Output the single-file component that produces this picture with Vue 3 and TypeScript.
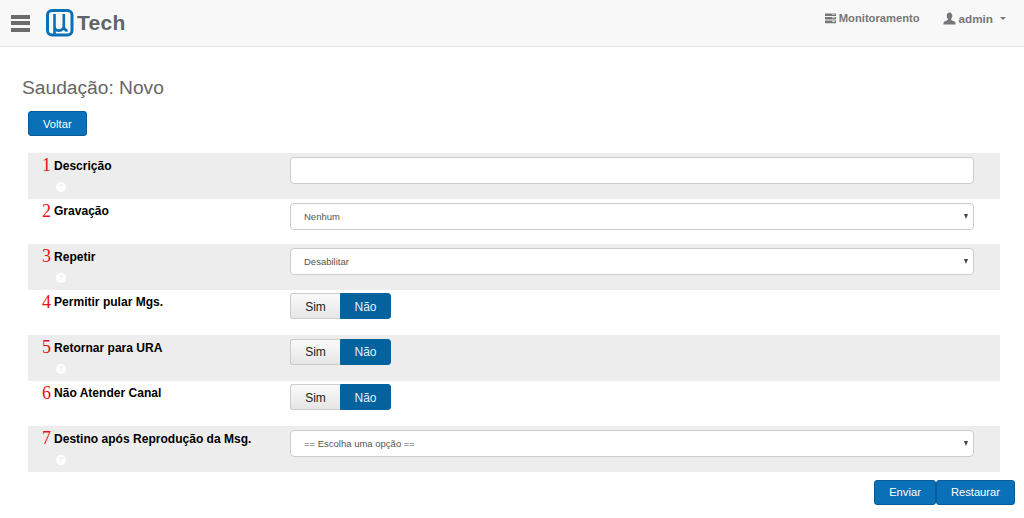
<script setup lang="ts">
interface Row {
  num: number
  label: string
  help: boolean
  kind: 'text' | 'select' | 'toggle'
  value?: string
}

const rows: Row[] = [
  { num: 1, label: 'Descrição', help: true, kind: 'text' },
  { num: 2, label: 'Gravação', help: false, kind: 'select', value: 'Nenhum' },
  { num: 3, label: 'Repetir', help: true, kind: 'select', value: 'Desabilitar' },
  { num: 4, label: 'Permitir pular Mgs.', help: false, kind: 'toggle' },
  { num: 5, label: 'Retornar para URA', help: true, kind: 'toggle' },
  { num: 6, label: 'Não Atender Canal', help: false, kind: 'toggle' },
  { num: 7, label: 'Destino após Reprodução da Msg.', help: true, kind: 'select', value: '== Escolha uma opção ==' }
]
</script>

<template>
  <div class="page">
    <header class="navbar">
      <div class="brand">
        <span class="burger"><i></i><i></i><i></i></span>
        <svg class="logo" width="30" height="30" viewBox="0 0 30 30">
          <rect x="2.5" y="2.5" width="24.5" height="24.5" rx="4.5" fill="none" stroke="#0a70b8" stroke-width="3" />
          <path d="M9.5 6V26M9.5 18C9.5 21.4 11.2 22.6 13.6 22.6C16.4 22.6 18.8 21 18.8 17.5V6M18.8 17.5C18.8 21.2 20 22.6 22.6 22.6" fill="none" stroke="#0a70b8" stroke-width="2.6" />
        </svg>
        <span class="brand-name">Tech</span>
      </div>
      <nav class="nav-right">
        <span class="nav-item">
          <svg width="11" height="11" viewBox="0 0 11 11">
            <path d="M0 0.5H11V3H0ZM0 4H11V6.6H0ZM0 7.6H11V10.2H0Z" fill="#777" />
            <path d="M7 1.2H10M7 4.8H10M7 8.4H10" stroke="#f5f5f5" stroke-width="0.8" />
          </svg>
          Monitoramento
        </span>
        <span class="nav-item user">
          <svg width="13" height="13" viewBox="0 0 13 13">
            <path d="M6.5 0.5C8.3 0.5 9.3 1.9 9.3 3.8C9.3 5.2 8.7 6.4 8 7C8 8 8.6 8.2 10 8.8C11.4 9.4 12.5 9.9 12.5 11V12.5H0.5V11C0.5 9.9 1.6 9.4 3 8.8C4.4 8.2 5 8 5 7C4.3 6.4 3.7 5.2 3.7 3.8C3.7 1.9 4.7 0.5 6.5 0.5Z" fill="#777" />
          </svg>
          admin
          <span class="caret"></span>
        </span>
      </nav>
    </header>

    <main class="content">
      <h1 class="title">Saudação: Novo</h1>
      <div class="back"><button class="btn" type="button">Voltar</button></div>

      <form class="form" @submit.prevent>
        <div v-for="row in rows" :key="row.num" class="row" :class="{ odd: row.num % 2 === 1 }">
          <div class="label-col">
            <div class="label-line">
              <span class="num">{{ row.num }}</span>
              <label class="label">{{ row.label }}</label>
            </div>
            <span v-if="row.help" class="help">?</span>
          </div>
          <div class="field-col">
            <input v-if="row.kind === 'text'" class="control" type="text" />
            <div v-else-if="row.kind === 'select'" class="control select">
              <span>{{ row.value }}</span>
              <span class="arrow"></span>
            </div>
            <div v-else class="toggle">
              <span class="opt">Sim</span>
              <span class="opt on">Não</span>
            </div>
          </div>
        </div>
      </form>

      <div class="actions">
        <button class="btn" type="button">Enviar</button>
        <button class="btn" type="button">Restaurar</button>
      </div>
    </main>
  </div>
</template>

<style>
html,
body {
  margin: 0;
  background: #fff;
  overflow: hidden;
}
</style>

<style scoped>
.page {
  font-family: "Liberation Sans", Arial, sans-serif;
  font-size: 12px;
  color: #000;
  height: 518px;
  overflow: hidden;
}

.navbar {
  height: 46px;
  background: #f8f8f8;
  border-bottom: 1px solid #e7e7e7;
  display: flex;
  justify-content: space-between;
  align-items: center;
  padding: 0 18px 0 11px;
}

.brand {
  display: flex;
  align-items: center;
}

.burger {
  display: flex;
  flex-direction: column;
  gap: 2.5px;
  width: 19px;
  margin-right: 15px;
}

.burger i {
  display: block;
  height: 4px;
  background: #6c6c6c;
}

.logo {
  margin-right: 2px;
}

.brand-name {
  font-size: 21px;
  font-weight: bold;
  color: #5f6468;
  letter-spacing: 0.3px;
}

.nav-right {
  display: flex;
  align-items: center;
  gap: 23px;
  margin-top: -10px;
}

.nav-item {
  display: flex;
  align-items: center;
  gap: 3px;
  font-size: 11.2px;
  font-weight: bold;
  color: #777;
}

.user {
  font-size: 11.7px;
}

.caret {
  width: 0;
  height: 0;
  margin-left: 4px;
  border-top: 3px solid #777;
  border-left: 3.5px solid transparent;
  border-right: 3.5px solid transparent;
}

.content {
  padding: 0 9px 0 28px;
}

.title {
  margin: 29px 0 11px -6px;
  font-size: 19.2px;
  line-height: 24px;
  font-weight: normal;
  color: #666;
}

.back {
  display: flex;
  margin-bottom: 17px;
}

.btn {
  height: 25px;
  padding: 0 14px;
  font-family: inherit;
  font-size: 11.2px;
  color: #fff;
  background: #0a70b8;
  border: 1px solid #075b98;
  border-radius: 3px;
}

.form {
  width: 972px;
}

.row {
  height: 45.5px;
  box-sizing: border-box;
  display: flex;
  padding-top: 4px;
}

.row.odd {
  background: #ededed;
}

.label-col {
  width: 262px;
  padding-left: 14px;
  box-sizing: border-box;
}

.label-line {
  display: flex;
  align-items: flex-start;
}

.num {
  width: 12px;
  font-family: "Liberation Serif", "Times New Roman", serif;
  font-size: 18px;
  line-height: 16px;
  color: #e8101a;
}

.label {
  padding-top: 0.5px;
  font-size: 12.05px;
  font-weight: bold;
  line-height: 16px;
}

.help {
  display: block;
  width: 10px;
  height: 10px;
  margin: 8.5px 0 0 14px;
  border-radius: 50%;
  background: #fff;
  color: #ededed;
  font-size: 8px;
  font-weight: bold;
  line-height: 10px;
  text-align: center;
}

.field-col {
  width: 684px;
}

.control {
  display: block;
  width: 100%;
  height: 27px;
  box-sizing: border-box;
  background: #fff;
  border: 1px solid #ccc;
  border-radius: 4px;
  font-family: inherit;
  font-size: 9.5px;
  color: #555;
}

.select {
  display: flex;
  justify-content: space-between;
  align-items: center;
  padding: 0 5px 0 13px;
}

.arrow {
  width: 0;
  height: 0;
  border-top: 5px solid #444;
  border-left: 2.5px solid transparent;
  border-right: 2.5px solid transparent;
}

.toggle {
  display: flex;
  width: 101px;
  height: 26px;
  margin-top: -0.5px;
}

.opt {
  flex: 1;
  display: flex;
  align-items: center;
  justify-content: center;
  box-sizing: border-box;
  padding-top: 1px;
  font-size: 12px;
  color: #222;
  background: linear-gradient(#fafafa, #e6e6e6);
  border: 1px solid #ccc;
  border-right: none;
  border-radius: 3px 0 0 3px;
}

.opt.on {
  color: #e6f0f8;
  background: #04629f;
  border: 1px solid #04629f;
  border-radius: 0 3px 3px 0;
}

.actions {
  display: flex;
  justify-content: flex-end;
  margin-top: 8px;
}
</style>
